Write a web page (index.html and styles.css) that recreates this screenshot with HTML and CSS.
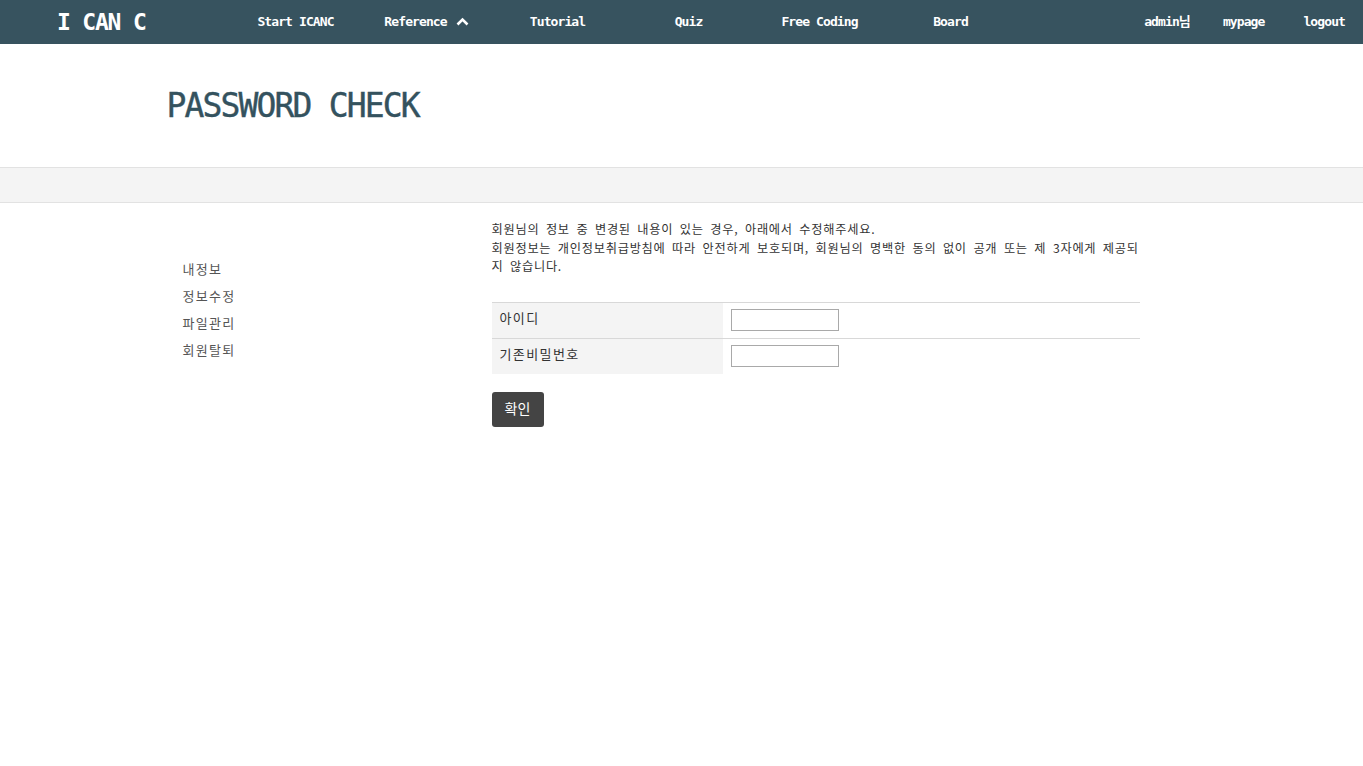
FILE: index.html
```html
<!DOCTYPE html>
<html lang="ko">
<head>
<meta charset="utf-8">
<title>PASSWORD CHECK - I CAN C</title>
<link rel="stylesheet" href="styles.css">
</head>
<body>
<nav class="topnav">
  <a class="logo" href="#">I CAN C</a>
  <ul class="menu">
    <li><a href="#">Start ICANC</a></li>
    <li><a href="#">Reference <svg class="chev" width="13" height="9" viewBox="0 0 13 9"><polyline points="1.5,7.5 6.5,2.5 11.5,7.5" fill="none" stroke="#fff" stroke-width="2.6"/></svg></a></li>
    <li><a href="#">Tutorial</a></li>
    <li><a href="#">Quiz</a></li>
    <li><a href="#">Free Coding</a></li>
    <li><a href="#">Board</a></li>
  </ul>
  <ul class="usermenu">
    <li class="u-admin"><a href="#">admin님</a></li>
    <li class="u-mypage"><a href="#">mypage</a></li>
    <li><a href="#">logout</a></li>
  </ul>
</nav>

<header class="pagehead">
  <div class="container">
    <h1 class="title">PASSWORD CHECK</h1>
  </div>
</header>
<div class="subbar"></div>

<main class="container content">
  <aside class="sidebar">
    <ul>
      <li><a href="#">내정보</a></li>
      <li><a href="#">정보수정</a></li>
      <li><a href="#">파일관리</a></li>
      <li><a href="#">회원탈퇴</a></li>
    </ul>
  </aside>
  <section class="main">
    <p class="notice">회원님의 정보 중 변경된 내용이 있는 경우, 아래에서 수정해주세요.<br>회원정보는 개인정보취급방침에 따라 안전하게 보호되며, 회원님의 명백한 동의 없이 공개 또는 제 3자에게 제공되지 않습니다.</p>
    <form class="form">
      <table class="ftable">
        <tr>
          <th>아이디</th>
          <td><input type="text" class="inp"></td>
        </tr>
        <tr>
          <th>기존비밀번호</th>
          <td><input type="password" class="inp"></td>
        </tr>
      </table>
      <button type="button" class="btn">확인</button>
    </form>
  </section>
</main>
</body>
</html>
```

FILE: styles.css
```css
* { box-sizing: border-box; }
body {
  margin: 0;
  background: #fff;
  font-family: "DejaVu Sans Mono", "Noto Sans CJK KR", monospace;
  color: #333;
}
a { text-decoration: none; color: inherit; }
ul { list-style: none; margin: 0; padding: 0; }

.topnav {
  height: 44px;
  background: #37535f;
  display: flex;
  align-items: center;
  padding-left: 57px;
  padding-right: 18px;
  color: #fff;
}
.logo {
  width: 173px;
  font-size: 23px;
  font-weight: bold;
  letter-spacing: -1.2px;
  color: #fff;
  line-height: 44px;
}
.menu {
  display: flex;
}
.menu li {
  width: 131px;
  text-align: center;
}
.menu a, .usermenu a {
  font-size: 13px;
  font-weight: bold;
  letter-spacing: -0.9px;
  color: #fff;
  line-height: 44px;
  white-space: nowrap;
}
.chev { vertical-align: 0px; margin-left: 2px; }
.usermenu {
  display: flex;
  margin-left: auto;
}
.u-admin { margin-right: 33px; }
.u-mypage { margin-right: 39px; }

.container {
  width: 1030px;
  margin: 0 auto;
}
.pagehead {
  height: 123px;
  display: flex;
  align-items: center;
}
.title {
  margin: 0;
  font-size: 33px;
  font-weight: normal;
  letter-spacing: -1.85px;
  color: #34525e;
  -webkit-text-stroke: 0.4px #34525e;
}
.subbar {
  height: 36px;
  background: #f4f4f4;
  border-top: 1px solid #e2e2e2;
  border-bottom: 1px solid #e2e2e2;
}

.content {
  display: flex;
  padding-top: 17px;
}
.sidebar {
  width: 325px;
  padding-left: 16px;
  padding-top: 39px;
}
.sidebar li {
  height: 27px;
  font-family: "Noto Sans CJK KR", sans-serif;
  font-size: 13px;
  letter-spacing: 1.3px;
  color: #555;
  line-height: 20px;
}
.main {
  width: 648px;
}
.notice {
  margin: 0;
  font-family: "Noto Sans CJK KR", sans-serif;
  font-size: 12.2px;
  letter-spacing: 0.75px;
  word-spacing: 2.4px;
  line-height: 18.5px;
  color: #333;
}
.form { margin-top: 26px; }
.ftable {
  width: 100%;
  border-collapse: collapse;
  border-top: 1px solid #d8d8d8;
}
.ftable tr + tr { border-top: 1px solid #d8d8d8; }
.ftable th {
  width: 231px;
  background: #f4f4f4;
  text-align: left;
  font-weight: normal;
  font-family: "Noto Sans CJK KR", sans-serif;
  font-size: 13px;
  color: #333;
  padding: 0 8px 6px;
  height: 36px;
  letter-spacing: 1.4px;
}
.ftable td {
  padding: 0 8px;
  height: 36px;
}
.inp {
  display: block;
  width: 108px;
  height: 22px;
  border: 1px solid #a9a9a9;
  padding: 1px 2px;
  margin: 0;
  font-size: 13px;
  background: #fff;
}
.btn {
  margin-top: 18px;
  width: 52px;
  height: 35px;
  background: #444;
  color: #fff;
  border: 0;
  border-radius: 3px;
  font-family: "Noto Sans CJK KR", sans-serif;
  font-size: 14px;
  padding: 0 0 3px;
}
```
